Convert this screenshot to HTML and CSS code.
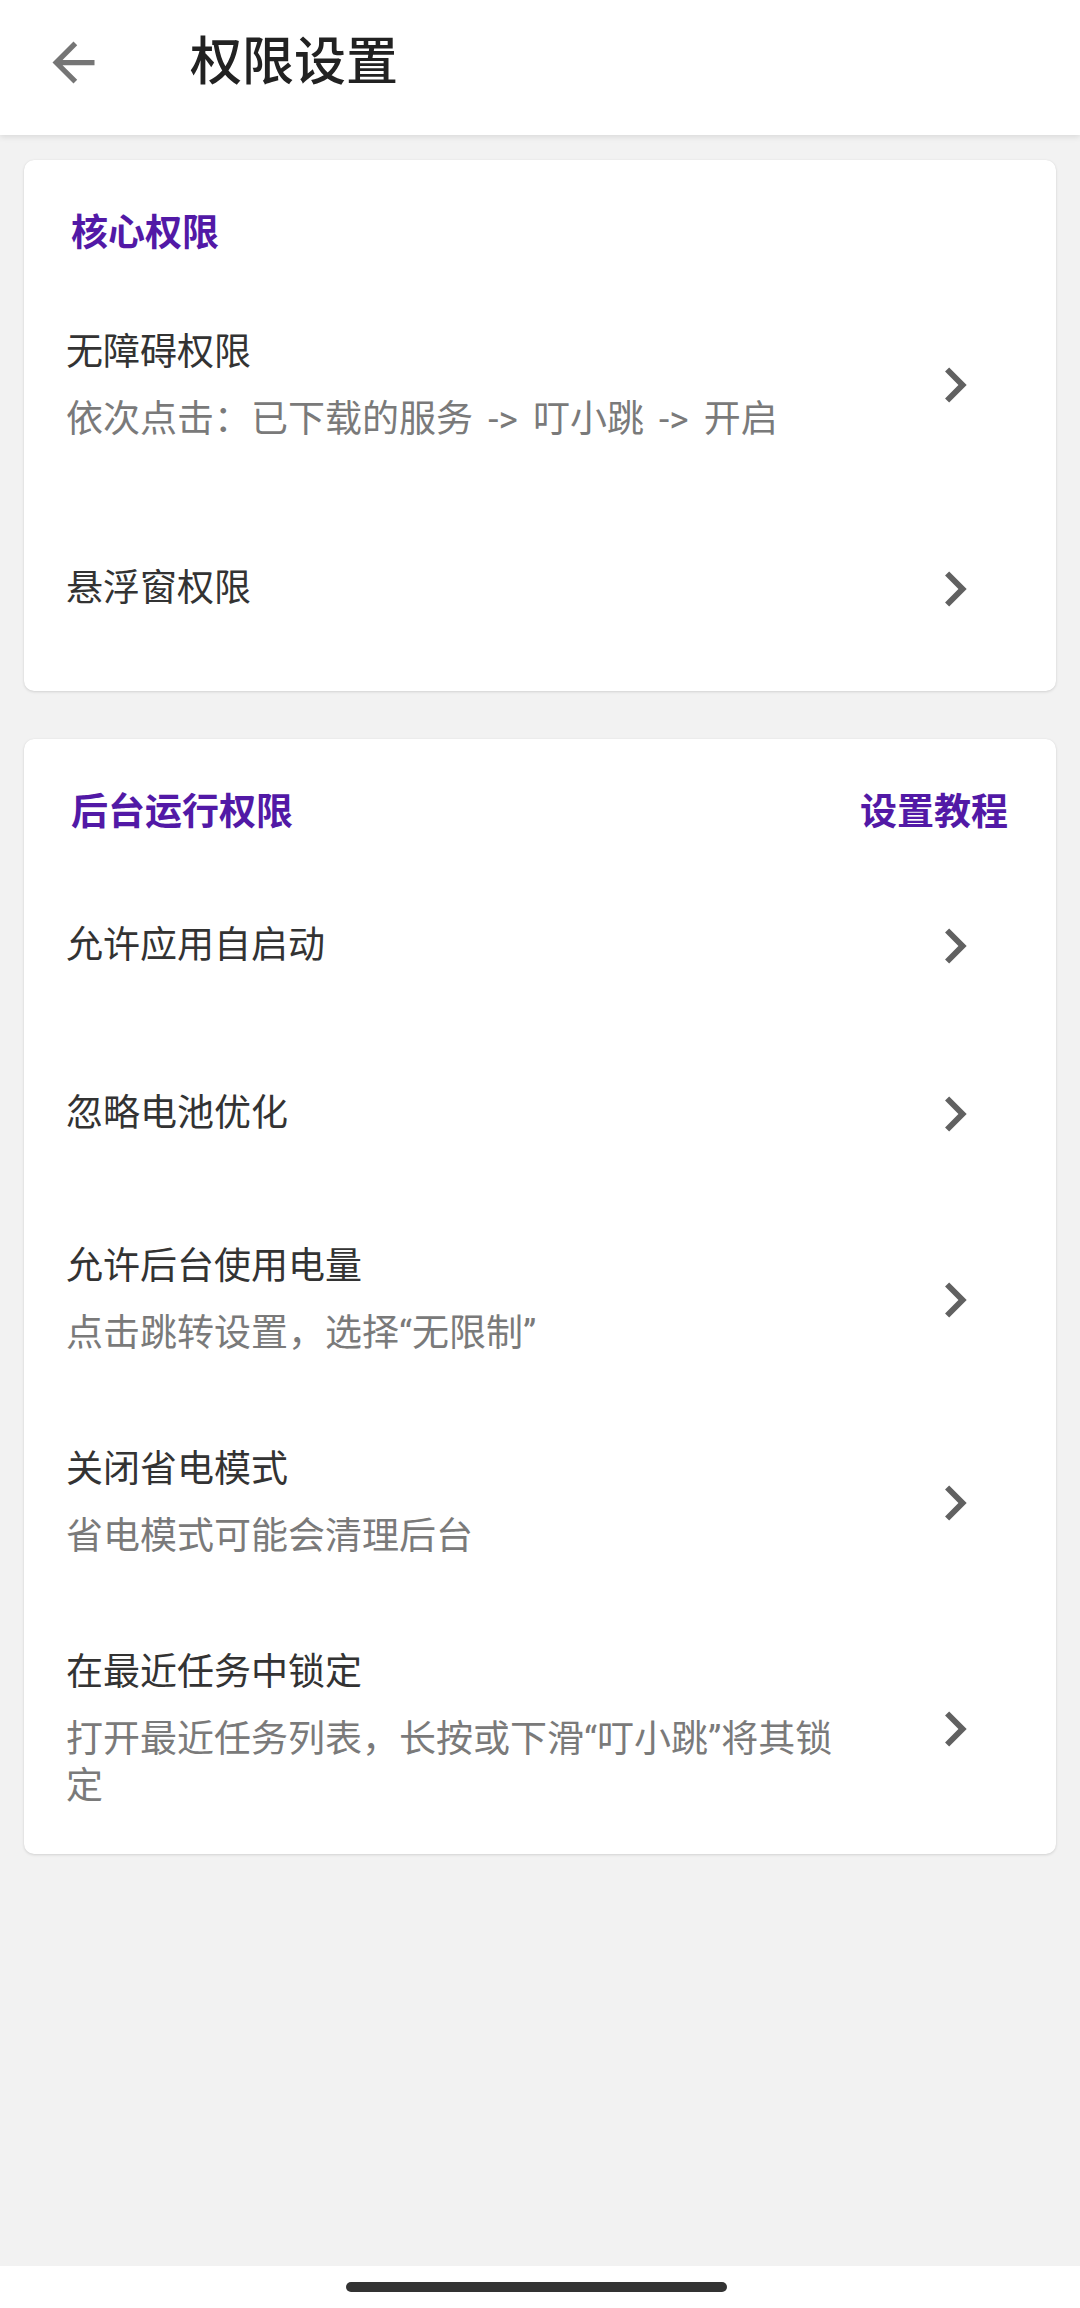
FILE: index.html
```html
<!DOCTYPE html>
<html lang="zh-CN">
<head>
<meta charset="utf-8">
<title>权限设置</title>
<link rel="stylesheet" href="styles.css">
</head>
<body>
<div class="app">
  <header class="topbar">
    <svg class="back" viewBox="0 0 24 24"><path d="M20 11H7.83l5.59-5.59L12 4l-8 8 8 8 1.41-1.41L7.83 13H20v-2z"/></svg>
    <h1 class="title">权限设置</h1>
  </header>

  <main class="content">
    <section class="card">
      <div class="card-head">
        <span class="head-text">核心权限</span>
      </div>
      <div class="row row-tall">
        <div class="row-text">
          <div class="row-title">无障碍权限</div>
          <div class="row-sub">依次点击：已下载的服务 -&gt; 叮小跳 -&gt; 开启</div>
        </div>
        <svg class="chev" viewBox="0 0 24 24"><path d="M10 6L8.59 7.41 13.17 12l-4.58 4.59L10 18l6-6z"/></svg>
      </div>
      <div class="row row-tall">
        <div class="row-text">
          <div class="row-title">悬浮窗权限</div>
        </div>
        <svg class="chev" viewBox="0 0 24 24"><path d="M10 6L8.59 7.41 13.17 12l-4.58 4.59L10 18l6-6z"/></svg>
      </div>
    </section>

    <section class="card">
      <div class="card-head">
        <span class="head-text">后台运行权限</span>
        <span class="head-text">设置教程</span>
      </div>
      <div class="row row-single">
        <div class="row-text">
          <div class="row-title">允许应用自启动</div>
        </div>
        <svg class="chev" viewBox="0 0 24 24"><path d="M10 6L8.59 7.41 13.17 12l-4.58 4.59L10 18l6-6z"/></svg>
      </div>
      <div class="row row-single">
        <div class="row-text">
          <div class="row-title">忽略电池优化</div>
        </div>
        <svg class="chev" viewBox="0 0 24 24"><path d="M10 6L8.59 7.41 13.17 12l-4.58 4.59L10 18l6-6z"/></svg>
      </div>
      <div class="row">
        <div class="row-text">
          <div class="row-title">允许后台使用电量</div>
          <div class="row-sub">点击跳转设置，选择“无限制”</div>
        </div>
        <svg class="chev" viewBox="0 0 24 24"><path d="M10 6L8.59 7.41 13.17 12l-4.58 4.59L10 18l6-6z"/></svg>
      </div>
      <div class="row">
        <div class="row-text">
          <div class="row-title">关闭省电模式</div>
          <div class="row-sub">省电模式可能会清理后台</div>
        </div>
        <svg class="chev" viewBox="0 0 24 24"><path d="M10 6L8.59 7.41 13.17 12l-4.58 4.59L10 18l6-6z"/></svg>
      </div>
      <div class="row">
        <div class="row-text">
          <div class="row-title">在最近任务中锁定</div>
          <div class="row-sub">打开最近任务列表，长按或下滑“叮小跳”将其锁定</div>
        </div>
        <svg class="chev" viewBox="0 0 24 24"><path d="M10 6L8.59 7.41 13.17 12l-4.58 4.59L10 18l6-6z"/></svg>
      </div>
    </section>
  </main>

  <footer class="navbar">
    <div class="handle"></div>
  </footer>
</div>
</body>
</html>
```

FILE: styles.css
```css
* {
  box-sizing: border-box;
}

html, body {
  margin: 0;
  padding: 0;
}

body {
  width: 1080px;
  height: 2308px;
  background: #f2f2f2;
  font-family: Roboto, "Noto Sans CJK SC", sans-serif;
  overflow: hidden;
}

.app {
  height: 2308px;
  display: flex;
  flex-direction: column;
}

.topbar {
  height: 135px;
  flex: none;
  background: #ffffff;
  display: flex;
  align-items: center;
  padding-bottom: 10px;
  box-shadow: 0 2px 6px rgba(0, 0, 0, 0.10);
  position: relative;
  z-index: 1;
}

.back {
  width: 63px;
  height: 63px;
  margin-left: 42px;
  fill: #757575;
  flex: none;
}

.title {
  margin: 0 0 0 85px;
  font-size: 52px;
  line-height: 60px;
  font-weight: 500;
  color: #222222;
}

.content {
  flex: 1;
  padding: 25px 24px 0 24px;
  display: flex;
  flex-direction: column;
  gap: 48px;
}

.card {
  background: #ffffff;
  border-radius: 10px;
  box-shadow: 0 1px 3px rgba(0, 0, 0, 0.13), 0 0 1px rgba(0, 0, 0, 0.08);
  display: flex;
  flex-direction: column;
}

.card-head {
  display: flex;
  justify-content: space-between;
  padding: 55px 48px 31px 47px;
}

.head-text {
  font-size: 37px;
  line-height: 37px;
  font-weight: 700;
  color: #5219a6;
}

.row {
  display: flex;
  align-items: center;
  padding: 44px 0;
  min-height: 203px;
}

.row-single {
  min-height: 168px;
}

.row-tall {
  min-height: 204px;
}

.row-text {
  flex: 1;
  padding-left: 42px;
  margin-right: 64px;
}

.row-title {
  font-size: 37px;
  line-height: 50px;
  color: #333333;
}

.row-sub {
  margin-top: 18px;
  font-size: 37px;
  line-height: 47px;
  word-spacing: 6px;
  color: #7a7a7a;
}

.chev {
  width: 70px;
  height: 70px;
  flex: none;
  margin-right: 66px;
  fill: #616161;
}

.navbar {
  height: 42px;
  flex: none;
  background: #ffffff;
  display: flex;
  justify-content: flex-start;
  padding-top: 16px;
}

.handle {
  width: 381px;
  height: 10px;
  margin-left: 346px;
  border-radius: 5px;
  background: #333333;
}
```
